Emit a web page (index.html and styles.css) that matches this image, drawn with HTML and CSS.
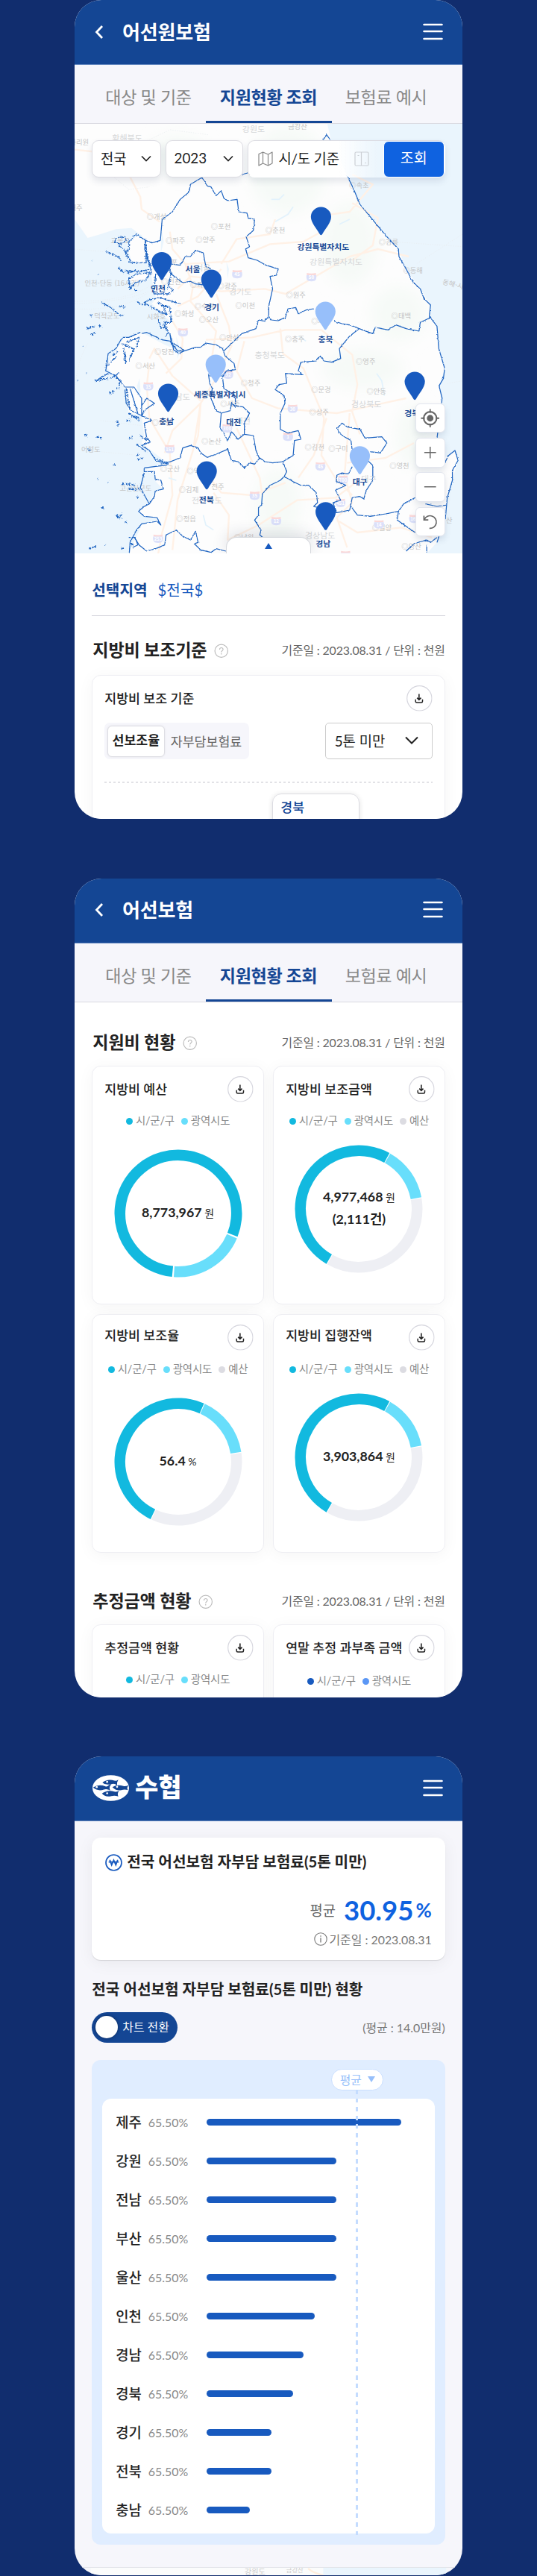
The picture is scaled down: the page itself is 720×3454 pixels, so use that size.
FILE: index.html
```html
<!DOCTYPE html>
<html lang="ko">
<head>
<meta charset="utf-8">
<title>어선원보험</title>
<link rel="stylesheet" href="styles.css">
</head>
<body>
<svg class="defs" width="0" height="0">
  <defs>
    <symbol id="back" viewBox="0 0 12 20"><path d="M10 2 2.500 10 10 18" fill="none" stroke="#fff" stroke-width="2.800"/></symbol>
    <symbol id="menu" viewBox="0 0 27 24"><path d="M1.500 2h24M1.500 11h24M1.500 21h24" stroke="#fff" stroke-width="2.600" stroke-linecap="round"/></symbol>
    <symbol id="chev" viewBox="0 0 14 9"><path d="m1 1.500 6 6 6-6" fill="none" stroke="#222" stroke-width="1.700"/></symbol>
    <symbol id="help" viewBox="0 0 20 20"><circle cx="10" cy="10" r="8.900" fill="none" stroke="#bbb" stroke-width="1.200"/><path d="M7.600 8.100c0-3.300 5-3.100 4.800-.2-.1 1.800-2.400 1.800-2.400 3.800M10 13v1.800" fill="none" stroke="#bbb" stroke-width="1.200"/></symbol>
    <symbol id="down" viewBox="0 0 35 35"><circle cx="17.500" cy="17.500" r="16.800" fill="#fff" stroke="#d6d6de" stroke-width="1.200"/><path d="M17 11.500v8M14.300 16.800l2.700 2.700 2.700-2.700" fill="none" stroke="#222" stroke-width="1.600"/><path d="M12.300 18.800v2.700q0 1.800 1.800 1.800h5.800q1.800 0 1.800-1.800v-2.700" fill="none" stroke="#222" stroke-width="1.500"/></symbol>
    <symbol id="pin" viewBox="0 0 27 39" overflow="visible"><path d="M13.500 38.500c-1 0-1.700-1-2.300-2.200C8.300 30.500 0 21.500 0 13.400a13.500 13.500 0 0 1 27 0c0 8.100-8.300 17.100-11.200 22.900-.6 1.200-1.300 2.200-2.300 2.200z"/></symbol>
    <symbol id="shield" viewBox="0 0 40 36"><path d="M3 3q17 4 34 0v8H3z" fill="#fbd9d9"/><path d="M2 11h36q3 17-6 22-12 4-24 0-9-5-6-22z" fill="#dbe0fa"/></symbol>
    <filter id="rough" x="-5%" y="-5%" width="110%" height="110%"><feTurbulence type="fractalNoise" baseFrequency=".09" numOctaves="3" seed="4"/><feDisplacementMap in="SourceGraphic" scale="7" xChannelSelector="R" yChannelSelector="G"/></filter>
    <filter id="ragged" x="-5%" y="-5%" width="110%" height="110%"><feTurbulence type="fractalNoise" baseFrequency=".16" numOctaves="3" seed="8"/><feDisplacementMap in="SourceGraphic" scale="14" xChannelSelector="R" yChannelSelector="G"/></filter>
    <filter id="haze"><feGaussianBlur stdDeviation="30"/></filter>
  </defs>
</svg>

<main class="board">

<section class="phone">
  <header class="bar"><svg class="ico-back"><use href="#back"/></svg><h1>어선원보험</h1><svg class="ico-menu"><use href="#menu"/></svg></header>
  <nav class="tabs"><a>대상 및 기준</a><a class="on">지원현황 조회</a><a>보험료 예시</a></nav>

  <div class="map">
    <svg class="map-art" viewBox="29 496 1510 1728" preserveAspectRatio="none">
      <rect x="29" y="496" width="1510" height="1728" fill="#fdfdfd"/>
      <g fill="#f6faf7" filter="url(#haze)">
        <ellipse cx="860" cy="680" rx="150" ry="180"/><ellipse cx="1100" cy="980" rx="110" ry="170"/><ellipse cx="1290" cy="1260" rx="110" ry="110"/><ellipse cx="1150" cy="1480" rx="160" ry="80"/><ellipse cx="820" cy="2030" rx="90" ry="150"/><ellipse cx="1350" cy="1750" rx="70" ry="130"/><ellipse cx="430" cy="620" rx="120" ry="80"/>
      </g>
      <g fill="#eaf5fd">
        <path d="M1013 496 1028 565 1090 705 1112 750 1140 820 1180 870 1240 945 1290 1000 1320 1080 1375 1160 1415 1225 1410 1260 1440 1310 1447 1400 1470 1480 1450 1550 1458 1620 1440 1760 1470 1840 1510 1810 1522 1850 1490 1960 1470 2070 1440 2180 1400 2224H1539V496z"/>
        <path d="M29 880 80 955 130 940 190 920 250 915 290 945 305 965 320 1060 330 1120 345 1200 330 1220 380 1270 400 1290 370 1310 400 1340 420 1380 440 1410 380 1385 290 1335 220 1360 150 1470 190 1520 225 1560 240 1660 290 1670 300 1750 290 1780 390 1860 300 1890 320 1900 285 1960 320 2025 280 2050 300 2075 360 2085 290 2110 240 2224H29z"/>
        <path d="m310 1900 30 0 5 35 28 30-30 8-25 50-30-60z"/>
        <path d="M272 1550l10-30 4 55-8 15zM425 1350l16 60-12 30zM368 920l8 50-12 50zM620 1050l10 30-5 40z"/>
      </g>
      <path d="M245 970 272 945 303 966 308 1055 252 1055 240 1010zM240 1120 285 1098 318 1095 300 1125 262 1140z" fill="#fdfdfd"/>
      <g fill="none" stroke="#fff1e6" stroke-width="7" stroke-linejoin="round">
        <path d="M29 600l90 10M240 700l45 90 5 50 70 50M400 930l10 70 50 60 30 90-10 60 100 120-20 130M410 1290l40 70-5 80-60 60M460 1060l170-10 160-70 130-10 70-40M490 1150l110 20 170-10 80 20 250-150 110-30 120 30M960 870l140-20 90-110-80-40M1110 815l100 60-20 110-80 60M600 1060l60-100 130-20 20-60M580 1180l50 130 10 80-60 130-60 100-10 130-20 60M540 1365l180-10 130-30 140 0 120 100 20 120-20 110 30 90M690 1370l-30 120 60 110 100 40 230 20 270-60M830 1320l10 100 80 60 80 200-10 150 60 100 60 60M320 1440l20-40 70 110 110 100M320 1460l-10 90 10 130 80 140 10 170-40 150-20 110M520 1620l-110 110-30 90M520 1620l-30 190-60 200-20 200M660 1720l90 200 10 70 M540 1900l60 80 120 10 130-50M570 1980l60 90-5 100 120-60 150-100 150-10 90-70M1090 1860l150-20 110-60M1100 1660l-20 250 30 110-60 60 40 120M1010 1680l-50 150-60 90M1050 2090l80 50 170-20 120 40M600 1080l-90 110-80 40M430 1160l50-50 90 10"/>
      </g>
      <g fill="none" stroke="#e8ebee" stroke-width="2" stroke-dasharray="4 5"><path d="M29 1000l110 10 50-40 60 10M29 1210q200 0 290-60M29 1220q200-10 290-50M1539 940l-180 120M1260 970l279 20M29 1240q180 10 280-60M80 1380q-70 120-40 330M130 1690l160 20M1480 1540l59-10M80 1810l200 20M200 620l200-100 150 20M170 700l70 60 80-10"/></g>
      <g fill="none" stroke="#e2f2fc" stroke-width="5"><path d="M795 800l30 0 20-20M810 890l50-30 20-30M1205 1500l20 30 10 60M900 1350l30 20M530 2070l10 40 30 20M1100 880l-40 20M395 1920l30 10"/></g>

      <g class="faint">
        <text x="682" y="528" class="area">강원도</text><text x="860" y="517">금강산</text><text x="175" y="565" class="area">황해북도</text><text x="10" y="580">사리원</text><text x="10" y="844">해주</text>
        <text x="310" y="880">◎개성</text><text x="560" y="918">◎포천</text><text x="772" y="935">◎춘천</text><text x="383" y="977">◎파주</text><text x="500" y="974">◎양주</text><text x="1098" y="755">◎속초</text><text x="1213" y="982">◎강릉</text><text x="1308" y="1096">◎동해</text><text x="380" y="1062">김포</text><text x="366" y="1141">◎인천</text><text x="478" y="1153">◎과천</text><text x="585" y="1160">◎광주</text><text x="852" y="1195">◎원주</text><text x="655" y="1236">◎이천</text><text x="496" y="1241">◎수원</text><text x="418" y="1270">◎화성</text><text x="513" y="1295">◎오산</text><text x="592" y="1366">◎안성</text><text x="848" y="1373">◎충주</text><text x="1262" y="1278">◎태백</text><text x="950" y="1300">◎제천</text><text x="1124" y="1463">◎영주</text><text x="340" y="1424">◎당진</text><text x="266" y="1479">◎서산</text><text x="676" y="1550">◎청주</text><text x="950" y="1577">◎문경</text><text x="1166" y="1582">◎안동</text><text x="942" y="1666">◎상주</text><text x="596" y="1633">◎세종</text><text x="330" y="1708">◎보령</text><text x="523" y="1783">◎논산</text><text x="925" y="1806">◎김천</text><text x="1017" y="1813">◎구미</text><text x="1255" y="1883">◎영천</text><text x="362" y="1893">◎군산</text><text x="466" y="1903">◎익산</text><text x="435" y="1977">◎김제</text><text x="562" y="1966">전주</text><text x="425" y="2095">◎정읍</text><text x="650" y="2170">◎남원</text><text x="1187" y="2130">◎밀양</text><text x="1302" y="2206">◎양산</text><text x="1475" y="2100">산</text><text x="55" y="1815">어청도</text><text x="205" y="1972">고군산군도</text><text x="68" y="1146">인천-단동 (16시간)</text><text x="105" y="1278">덕적군도</text><text x="310" y="1283">시화호</text><text x="1460" y="1140" transform="rotate(15 1460 1140)">동해-사카</text><text x="170" y="975">교동도</text>
        <g class="area"><text x="944" y="1064">강원특별자치도</text><text x="630" y="1182">경기도</text><text x="730" y="1438">충청북도</text><text x="420" y="1606">남도</text><text x="1106" y="1635">경상북도</text><text x="485" y="2024">전라북도</text><text x="926" y="2165">경상남도</text><text x="500" y="1086">서울</text><text x="655" y="1702">대전</text><text x="1145" y="1937">대구</text></g>
      </g>
      <g class="road">
        <use href="#shield" x="641" y="1080" width="42" height="40"/><text x="662" y="1109">45</text>
        <use href="#shield" x="930" y="1092" width="42" height="40"/><text x="951" y="1121">50</text>
        <use href="#shield" x="430" y="1314" width="42" height="40"/><text x="451" y="1343">40</text>
        <use href="#shield" x="295" y="1531" width="42" height="40"/><text x="316" y="1560">15</text>
        <use href="#shield" x="606" y="1484" width="42" height="40"/><text x="627" y="1513">32</text>
        <use href="#shield" x="857" y="1621" width="42" height="40"/><text x="878" y="1650">30</text>
        <use href="#shield" x="602" y="1700" width="42" height="40"/><text x="623" y="1729">300</text>
        <use href="#shield" x="839" y="1734" width="42" height="40"/><text x="860" y="1763">1</text>
        <use href="#shield" x="378" y="1783" width="42" height="40"/><text x="399" y="1812">151</text>
        <use href="#shield" x="965" y="1853" width="42" height="40"/><text x="986" y="1882">45</text>
        <use href="#shield" x="1053" y="1906" width="42" height="40"/><text x="1074" y="1935">700</text>
        <use href="#shield" x="709" y="1971" width="42" height="40"/><text x="730" y="2000">35</text>
        <use href="#shield" x="1043" y="2000" width="42" height="40"/><text x="1064" y="2029">451</text>
        <use href="#shield" x="793" y="2073" width="42" height="40"/><text x="814" y="2102">12</text>
        <use href="#shield" x="1193" y="2086" width="42" height="40"/><text x="1214" y="2115">14</text>
        <use href="#shield" x="1330" y="2064" width="42" height="40"/><text x="1347" y="2093">16</text>
        <use href="#shield" x="333" y="2144" width="42" height="40"/><text x="354" y="2173">253</text>
        <use href="#shield" x="1063" y="2210" width="42" height="40"/>
      </g>

      <g class="border" filter="url(#rough)">
        <path d="M997 560 1010 540 1028 565M1090 705 1112 750 1140 820 1180 870 1240 945 1290 1000 1292 1030 1320 1080 1345 1130 1375 1160 1390 1200 1415 1225 1410 1270 1440 1310 1447 1400 1470 1480 1465 1520 1448 1550 1460 1600 1456 1640 1440 1760M1470 1860 1485 1830 1510 1810 1522 1850 1500 1890 1500 1930 1480 2000 1473 2080 1440 2180"/>
        <path d="M363 965 370 880 410 850 440 800 475 770 480 740 525 712 545 745 560 750 580 785 600 765 610 795 625 805 662 800 668 850 700 855 705 875 730 880 725 925 697 950 710 990 695 1000 705 1035 740 1045 775 1065 822 1080 815 1105 790 1110 800 1160 785 1230 785 1270 770 1290 745 1285 735 1320 680 1340 640 1380 610 1410M680 700 703 694"/>
        <path d="M305 965 330 975 363 965M305 965 302 1000 320 1060 330 1100M405 1060 440 1065 460 1030 480 1030 500 1005 530 1015 540 1070 560 1080M385 1060 405 1100 430 1120 450 1135 480 1130 500 1140 540 1145"/>
        <path d="M785 1270 795 1285 820 1288 850 1275 860 1240 890 1235 900 1260 930 1245 960 1240M1040 1290 1070 1300 1100 1305 1150 1325 1190 1340 1200 1315 1250 1325 1280 1305 1320 1320 1370 1330 1375 1295 1415 1275"/>
        <path d="M1135 1322 1100 1350 1060 1400 1065 1440 1030 1455 1000 1450 985 1430 970 1450 910 1455 900 1490 915 1505 850 1500 855 1540 825 1545 810 1565 845 1590 848 1620 830 1660 830 1725 860 1740 900 1730 910 1765 885 1770 880 1830 840 1855 855 1895 845 1915"/>
        <path d="M455 1410 500 1395 520 1395 540 1378 580 1385 605 1400 615 1430 650 1460 655 1485 620 1490 605 1515 610 1560 640 1580 655 1600 655 1630 685 1635 710 1660 690 1700 690 1745 725 1750 735 1810 750 1845"/>
        <path d="M550 1500 555 1540 565 1560 560 1600 580 1650 600 1660 635 1650 640 1620 655 1635M600 1660 595 1720 610 1740 625 1770 640 1735 650 1745 665 1765 690 1745M550 1510H610"/>
        <path d="M390 1860 440 1840 450 1800 480 1790 510 1800 520 1820 545 1838 580 1825 625 1805 640 1850 665 1855 690 1880 710 1860 730 1865 750 1840 770 1855 800 1860 840 1855"/>
        <path d="M845 1915 830 1930 790 1950 760 1985 757 2030 745 2040 745 2070 730 2090 755 2130 750 2150 762 2160M262 2160 280 2190 310 2215 345 2205 380 2190 385 2150 425 2130 450 2155 480 2170 500 2135 510 2180 495 2185 520 2210 560 2220 580 2205 618 2215"/>
        <path d="M845 1915 880 1935 910 1950 940 1950 970 1980 975 2020 960 2035 1000 2045 1050 2060 1100 2050 1110 2000 1140 1995 1155 2005 1165 1970 1190 1930 1190 1870 1170 1850"/>
        <path d="M1180 1815 1220 1820 1245 1780 1225 1755 1160 1760 1140 1725 1090 1715 1070 1700 1052 1720 1060 1740 1080 1755 1105 1770 1110 1810M1110 1875 1095 1905 1070 1900 1050 1910 1048 1935 1085 1950 1045 1970 1065 2010 1035 2020 1050 2060"/>
        <path d="M1105 2035 1130 2070 1180 2075 1240 2065 1290 2055 1310 2025 1355 2000M1290 2055 1285 2090 1320 2115 1355 2140M1395 2025 1440 2035 1475 2030M1320 2215 1350 2185 1400 2170 1415 2180 1440 2160M1400 2220V2190"/>
        <path d="M290 1340 310 1335 370 1365 400 1370 430 1410 455 1410 435 1420 415 1405 400 1340 405 1375 440 1395 455 1410M285 1335 240 1355 215 1355 190 1400 160 1420 155 1460 150 1490 190 1510 205 1530 225 1555 260 1555 290 1600 290 1670 250 1650 230 1620 225 1565M245 1560 275 1660M290 1630 310 1600 340 1620 305 1645 290 1670 330 1690 300 1700 310 1760 325 1775 290 1790 320 1810 345 1850 395 1865M300 1880 390 1868M300 1882V1895L340 1895 343 1925 365 1930 375 1965 343 1973 340 1995 320 2025 285 1960 300 1900M320 2025 300 2035 278 2055 300 2075 350 2080 365 2110 350 2095 290 2105 270 2130 245 2180 242 2222M240 2160l25 0 10 30-20 10"/>
      </g>
      <g class="border coast" filter="url(#ragged)">
        <path d="M190 955l35-5 5 15-20 15-25-5zM240 970l30-30 35 25 3 90-60 0-20-45 15-10zM200 985l20 15 15 30M150 1010l50 20 10 15M305 970l8 70 15 30M225 1085l55 5 40-8M240 1120l30-20 55-5-20 30-40 10-20 25zM262 1160l10 10M345 1100l-8 80 60 0 15-15-20-20M395 1060l10 40-15 60M320 1205l40-10 80 25M330 1200l-30 15 30 20 60 30-20-40 30 10-50-20M370 1225l30 10 5 60-25 0 10 25-25-5-10-30M270 1210l15 10 20 5M135 1215l35 20 40 35 10-5M375 1300l20 35-10 15M230 1375l50-20-10 40M210 1380l50 20-20 50M220 1400l10 60-10-20M150 1475l40-40M160 1500l-50 30 50-10M190 1515l20 15-10 20M200 1500l-30 20M230 1560l15 90M240 1660l40 30M285 1750l25 20M270 1785l40 30M365 1865l25-10M345 1845l50 15"/>
        <path class="isles" d="M75 1320l35-10M95 1345l15-10M125 1305l8 10M90 1265l10 5M205 1230l20 3M70 1745l10 8M115 1755l20 5M195 1690l5 20M230 1690l15 0M240 1760l15-3M82 1808l12 2M180 1868l10 2M270 1828l10 0M215 1942l50 8M240 1965l45 2M135 2038l10 8M195 2080l20-15M190 2070l20 15M85 2205l30-10M272 1995l8 6M100 1045l1 1M120 1101l1 1M180 1425l20-15M190 1560l15 0M165 1580l20-8M250 1670l35 10M65 1390l1 1M75 1499l1 1M40 1530l1 1M225 2100l8-3M150 2188l1 1M210 2205l8-1M250 2185l8 8M275 1845l20-3M120 1921l1 1M160 1936l1 1M200 1075l20 20M235 1095l30-8"/>
      </g>

      <g class="pins">
        <use href="#pin" x="949" y="830" width="79" height="116"/><use href="#pin" x="329" y="1011" width="79" height="116"/><use href="#pin" x="522" y="1082" width="79" height="116"/>
        <use href="#pin" x="354" y="1541" width="79" height="116"/><use href="#pin" x="504" y="1853" width="79" height="116"/><use href="#pin" x="1314" y="1493" width="79" height="116"/><use href="#pin" x="967" y="2017" width="79" height="116"/>
        <g class="pale"><use href="#pin" x="966" y="1211" width="79" height="116"/><use href="#pin" x="539" y="1424" width="79" height="116"/><use href="#pin" x="1100" y="1792" width="79" height="116"/></g>
      </g>
      <g class="names">
        <text x="997" y="1002">강원특별자치도</text><text x="489" y="1093">서울</text><text x="354" y="1172">인천</text><text x="563" y="1246">경기</text><text x="1006" y="1376">충북</text><text x="594" y="1596">세종특별자치시</text><text x="387" y="1704">충남</text><text x="648" y="1707">대전</text><text x="542" y="2021">전북</text><text x="1342" y="1671">경북</text><text x="1140" y="1948">대구</text><text x="997" y="2196">경남</text>
      </g>
    </svg>

    <div class="filters">
      <div class="pick pick-a"><span>전국</span><svg class="chev"><use href="#chev"/></svg></div>
      <div class="pick pick-b"><span>2023</span><svg class="chev"><use href="#chev"/></svg></div>
      <div class="pick-c">
        <svg class="ico-map" viewBox="0 0 20 20"><path d="M1 3.500 6.500 1v15L1 19zM6.500 1l7 3v15l-7-3M13.500 4 19 1v15l-5.500 3" fill="none" stroke="#888" stroke-width="1.200" stroke-linejoin="round"/></svg>
        <span>시/도 기준</span>
        <svg class="ico-split" viewBox="0 0 20 20"><rect x="1" y="1" width="18" height="18" rx="1.500" fill="none" stroke="#ccd0d5" stroke-width="1.200"/><path d="M9.500 1v18M4.500 5.500h2M14 15.500h2" stroke="#ccd0d5" stroke-width="1.200"/></svg>
        <button>조회</button>
      </div>
    </div>

    <div class="controls">
      <i><svg viewBox="0 0 26 26"><circle cx="13" cy="13" r="8.800" fill="none" stroke="#666" stroke-width="2.200"/><circle cx="13" cy="13" r="4.500" fill="#666"/><path d="M13 .5v5M13 20.500v5M.5 13h5M20.500 13h5" stroke="#666" stroke-width="1.800"/></svg></i>
      <i><svg viewBox="0 0 26 26"><path d="M13 5v16M5 13h16" stroke="#666" stroke-width="1.500"/></svg></i>
      <i><svg viewBox="0 0 26 26"><path d="M5 13h16" stroke="#666" stroke-width="1.500"/></svg></i>
      <i><svg viewBox="0 0 26 26"><path d="M4.500 4.500v5.800h6M5 9.800A8.600 8.600 0 1 1 12 21.800" fill="none" stroke="#666" stroke-width="1.700"/></svg></i>
    </div>
    <div class="handle"><svg viewBox="0 0 10 8"><path d="M5 0l5 8H0z" fill="#185abf"/></svg></div>
  </div>

  <div class="sheet">
    <div class="region"><b>선택지역</b><span>$전국$</span></div>
    <div class="title title-first"><h2>지방비 보조기준</h2><svg class="help"><use href="#help"/></svg><small>기준일 : 2023.08.31 / 단위 : 천원</small></div>
    <div class="card wide">
      <div class="card-head"><h3>지방비 보조 기준</h3><svg class="down"><use href="#down"/></svg></div>
      <div class="row"><div class="seg"><b>선보조율</b><span>자부담보험료</span></div><div class="select"><span>5톤 미만</span><svg class="chev2" viewBox="0 0 18 11"><path d="m1 1.500 8 8 8-8" fill="none" stroke="#222" stroke-width="2"/></svg></div></div>
      <div class="dots"></div>
      <div class="tip">경북</div>
    </div>
  </div>
</section>

<section class="phone">
  <header class="bar"><svg class="ico-back"><use href="#back"/></svg><h1>어선보험</h1><svg class="ico-menu"><use href="#menu"/></svg></header>
  <nav class="tabs"><a>대상 및 기준</a><a class="on">지원현황 조회</a><a>보험료 예시</a></nav>
  <div class="status">
    <div class="title"><h2>지원비 현황</h2><svg class="help"><use href="#help"/></svg><small>기준일 : 2023.08.31 / 단위 : 천원</small></div>
    <div class="grid">
      <article class="card">
        <div class="card-head"><h3>지방비 예산</h3><svg class="down"><use href="#down"/></svg></div>
        <p class="legend"><span class="c1">시/군/구</span><span class="c2">광역시도</span></p>
        <div class="donut low">
          <svg viewBox="0 0 172 172"><circle class="k1" cx="86" cy="86" r="78.200" pathLength="360" stroke-dasharray="286 74" transform="rotate(95.600 86 86)"/><circle class="k2" cx="86" cy="86" r="78.200" pathLength="360" stroke-dasharray="71 289" transform="rotate(23 86 86)"/></svg>
          <p><b>8,773,967</b> 원</p>
        </div>
      </article>
      <article class="card">
        <div class="card-head"><h3>지방비 보조금액</h3><svg class="down"><use href="#down"/></svg></div>
        <p class="legend"><span class="c1">시/군/구</span><span class="c2">광역시도</span><span class="c3">예산</span></p>
        <div class="donut">
          <svg viewBox="0 0 172 172"><circle class="k1" cx="86" cy="86" r="78.200" pathLength="360" stroke-dasharray="178.300 181.700" transform="rotate(120.500 86 86)"/><circle class="k2" cx="86" cy="86" r="78.200" pathLength="360" stroke-dasharray="49.800 310.200" transform="rotate(-60.400 86 86)"/><circle class="k3" cx="86" cy="86" r="78.200" pathLength="360" stroke-dasharray="129.500 230.500" transform="rotate(-9.800 86 86)"/></svg>
          <p><b>4,977,468</b> 원<br><b>(2,111건)</b></p>
        </div>
      </article>
      <article class="card second">
        <div class="card-head"><h3>지방비 보조율</h3><svg class="down"><use href="#down"/></svg></div>
        <p class="legend"><span class="c1">시/군/구</span><span class="c2">광역시도</span><span class="c3">예산</span></p>
        <div class="donut low">
          <svg viewBox="0 0 172 172"><circle class="k1" cx="86" cy="86" r="78.200" pathLength="360" stroke-dasharray="178 182" transform="rotate(115.800 86 86)"/><circle class="k2" cx="86" cy="86" r="78.200" pathLength="360" stroke-dasharray="56.400 303.600" transform="rotate(-65.400 86 86)"/><circle class="k3" cx="86" cy="86" r="78.200" pathLength="360" stroke-dasharray="123 237" transform="rotate(-8 86 86)"/></svg>
          <p><b>56.4</b> %</p>
        </div>
      </article>
      <article class="card second">
        <div class="card-head"><h3>지방비 집행잔액</h3><svg class="down"><use href="#down"/></svg></div>
        <p class="legend"><span class="c1">시/군/구</span><span class="c2">광역시도</span><span class="c3">예산</span></p>
        <div class="donut">
          <svg viewBox="0 0 172 172"><circle class="k1" cx="86" cy="86" r="78.200" pathLength="360" stroke-dasharray="178.300 181.700" transform="rotate(120.500 86 86)"/><circle class="k2" cx="86" cy="86" r="78.200" pathLength="360" stroke-dasharray="49.800 310.200" transform="rotate(-60.400 86 86)"/><circle class="k3" cx="86" cy="86" r="78.200" pathLength="360" stroke-dasharray="129.500 230.500" transform="rotate(-9.800 86 86)"/></svg>
          <p><b>3,903,864</b> 원</p>
        </div>
      </article>
    </div>
    <div class="title title-next"><h2>추정금액 현황</h2><svg class="help"><use href="#help"/></svg><small>기준일 : 2023.08.31 / 단위 : 천원</small></div>
    <div class="grid">
      <article class="card"><div class="card-head"><h3>추정금액 현황</h3><svg class="down"><use href="#down"/></svg></div><p class="legend"><span class="c1">시/군/구</span><span class="c2">광역시도</span></p></article>
      <article class="card"><div class="card-head"><h3>연말 추정 과부족 금액</h3><svg class="down"><use href="#down"/></svg></div><p class="legend nudge"><span class="c4">시/군/구</span><span class="c5">광역시도</span></p></article>
    </div>
  </div>
</section>

<section class="phone gray">
  <header class="bar">
    <svg class="logo" viewBox="0 0 147 104">
      <ellipse cx="73.500" cy="52" rx="73.500" ry="52" fill="#fff"/>
      <g fill="#144694"><path d="M2 50Q24 34 52 45 58 49 66 40 70 36 76 36 64 50 72 62 58 54 46 58 22 66 2 50z"/><path d="M40 30Q60 14 88 22 96 24 104 18 97 28 99 42 90 32 76 36 52 42 40 30z"/><path d="M80 48Q100 36 124 44 134 46 146 40 136 50 142 60 130 56 116 60 94 64 80 48z"/><path d="M38 74Q60 58 88 66 98 70 108 62 98 74 104 86 90 80 76 84 52 90 38 74z"/></g>
      <g fill="#fff"><circle cx="17" cy="48" r="4"/><circle cx="59" cy="27" r="4"/><circle cx="99" cy="47" r="4"/><circle cx="59" cy="73" r="4"/></g>
    </svg>
    <strong class="brand">수협</strong><svg class="ico-menu"><use href="#menu"/></svg>
  </header>
  <div class="premium">
    <div class="summary">
      <h3><svg viewBox="0 0 23 23"><circle cx="11.500" cy="11.500" r="10.500" fill="none" stroke="#185abf" stroke-width="1.700"/><path d="m6.200 7.800 2.500 6.800 2.800-6.400 2.800 6.400 2.500-6.800M4.700 10.700h13.600" fill="none" stroke="#185abf" stroke-width="1.700"/></svg>전국 어선보험 자부담 보험료(5톤 미만)</h3>
      <p class="avg"><span>평균</span><b>30.95</b><em>%</em></p>
      <p class="date"><svg viewBox="0 0 18 18"><circle cx="9" cy="9" r="8.200" fill="none" stroke="#777" stroke-width="1.100"/><path d="M9 7.300v6.200M9 4.300v1.500" stroke="#777" stroke-width="1.300"/></svg>기준일 : 2023.08.31</p>
    </div>
    <h3 class="chart-title">전국 어선보험 자부담 보험료(5톤 미만) 현황</h3>
    <div class="tools"><div class="toggle"><i></i>차트 전환</div><small>(평균 : 14.0만원)</small></div>
    <div class="chart">
      <div class="chart-pill">평균<svg viewBox="0 0 10 8"><path d="M0 0h10L5 8z" fill="#97bffa"/></svg></div>
      <div class="chart-body">
        <div class="item"><b>제주</b><span>65.50%</span><i style="width:260.500px"></i></div>
        <div class="item"><b>강원</b><span>65.50%</span><i style="width:173.500px"></i></div>
        <div class="item"><b>전남</b><span>65.50%</span><i style="width:173.500px"></i></div>
        <div class="item"><b>부산</b><span>65.50%</span><i style="width:173.500px"></i></div>
        <div class="item"><b>울산</b><span>65.50%</span><i style="width:173.500px"></i></div>
        <div class="item"><b>인천</b><span>65.50%</span><i style="width:144.700px"></i></div>
        <div class="item"><b>경남</b><span>65.50%</span><i style="width:130px"></i></div>
        <div class="item"><b>경북</b><span>65.50%</span><i style="width:116px"></i></div>
        <div class="item"><b>경기</b><span>65.50%</span><i style="width:87.200px"></i></div>
        <div class="item"><b>전북</b><span>65.50%</span><i style="width:87.200px"></i></div>
        <div class="item"><b>충남</b><span>65.50%</span><i style="width:58.200px"></i></div>
      </div>
      <div class="mean"></div>
    </div>
  </div>
  <svg class="peek" viewBox="0 0 520 12"><path d="M0 0h520v12H0z" fill="#fbfcfc"/><path d="M340 0h180v12H340z" fill="#eaf5fd"/><path d="M318 1q6 6 22 10" fill="none" stroke="#ffeedd" stroke-width="2.500"/><text x="225" y="10" font-size="11">강원도</text><text x="286" y="7" font-size="9">금강산</text></svg>
</section>

</main>
</body>
</html>
```

FILE: styles.css
```css
* { box-sizing: border-box; }
body, h1, h2, h3, p { margin: 0; }
body { background: #112d6e; color: #222; font-family: Lato, "Noto Sans CJK KR", sans-serif; -webkit-font-smoothing: antialiased; }
svg { display: block; flex: none; }
.defs { position: absolute; }
.board { display: flex; flex-direction: column; align-items: center; gap: 79.7px; height: 3454px; overflow: hidden; }
.phone { width: 520px; height: 1098px; flex: none; border-radius: 36px; overflow: hidden; background: #fff; white-space: nowrap; }
.phone.gray { background: #f6f6fb; display: flex; flex-direction: column; }

.bar { height: 87px; flex: none; background: #144694; color: #fff; display: flex; align-items: center; padding: 0 26px 1px 27px; border-bottom: 1px solid #5f84bd; }
.bar h1 { font-size: 26px; line-height: 38px; font-weight: 700; margin-left: 25px; letter-spacing: -.2px; }
.ico-back { width: 12px; height: 20px; }
.ico-menu { width: 27px; height: 24px; margin-left: auto; }

.tabs { height: 79px; background: #f6f6fb; display: flex; padding-left: 22.5px; border-bottom: 1px solid #d9d9e0; }
.tabs a { width: 153px; text-align: center; padding-top: 26px; font-size: 23.1px; line-height: 34px; letter-spacing: -.4px; color: #888; height: 78px; }
.tabs a.on { width: 169px; color: #144694; font-weight: 700; border-bottom: 3px solid #144694; }
.tabs a:last-child { width: 146px; }

.map { position: relative; height: 576px; border-bottom: 1px solid #d5d8dd; }
.map-art { position: absolute; width: 520px; height: 576px; }
.map-art text { font-family: "Noto Sans CJK KR", sans-serif; }
.faint { fill: #c4c4c4; font-size: 27px; }
.faint .area { fill: #d4d6d8; font-size: 32px; }
.road text { font-size: 18px; font-weight: 700; fill: #fff; text-anchor: middle; }
.border { fill: none; stroke: #2166c2; stroke-width: 3.6; stroke-linejoin: round; }
.coast { stroke-width: 3.8; }
.isles { stroke-width: 7; stroke-dasharray: 8 4; }
.pins { fill: #185abf; }
.pins .pale { fill: #97bffa; }
.names { fill: #1a4a96; font-size: 31.5px; font-weight: 700; text-anchor: middle; }

.filters { position: relative; display: flex; gap: 6px; padding: 22px 23px 0; font-size: 18.8px; }
.pick, .pick-c { height: 50px; border: 1.5px solid #dcdce2; border-radius: 9px; box-shadow: 0 5px 10px rgba(40, 60, 100, .12); display: flex; align-items: center; padding-bottom: 4px; background: #fff; }
.pick { justify-content: space-between; padding-left: 11px; padding-right: 12px; }
.pick-a { width: 92.500px; }
.pick-b { width: 104px; }
.chev { width: 14px; height: 9px; margin-top: 3px; }
.pick-c { flex: 1; padding: 0 0 0 13px; background: linear-gradient(90deg, #fff 45%, rgba(255, 255, 255, .1) 66%); border-color: #dcdce2 transparent transparent #dcdce2; }
.pick-c span { margin: -4px 20px 0 8px; letter-spacing: -.2px; }
.ico-map, .ico-split { width: 20px; height: 20px; }
.pick-c button { margin-left: auto; width: 82.500px; height: 49px; border: 1.5px solid #fff; border-radius: 7px; background: #0f62e0; color: #fff; font: 400 19.500px Lato, "Noto Sans CJK KR", sans-serif; padding: 0 0 5px; }
.controls { position: absolute; right: 23px; top: 374.500px; display: flex; flex-direction: column; gap: 6.700px; }
.controls i { width: 40px; height: 39.700px; border: 1px solid #e3e6ee; border-radius: 6px; background: #fff; box-shadow: 0 5px 9px rgba(40, 60, 100, .13); display: flex; align-items: center; justify-content: center; }
.controls svg { width: 25.500px; height: 25.500px; }
.handle { position: absolute; left: 203px; bottom: -1px; width: 114px; height: 22px; background: #fff; border: 1px solid #d5d8dd; border-bottom: 0; border-radius: 14px 14px 0 0; box-shadow: 0 -4px 20px rgba(40, 50, 80, .16); display: flex; justify-content: center; padding-top: 7px; clip-path: inset(-40px -40px 0); }
.handle svg { width: 10px; height: 8px; }

.sheet { padding: 0 23.300px; }
.region { display: flex; gap: 14px; height: 84px; padding-top: 34px; font-size: 20.200px; line-height: 30px; border-bottom: 1.500px solid #d6d6de; color: #185abf; }
.region b { color: #144694; }
.title { display: flex; align-items: center; height: 40px; padding-left: 1px; }
.title-first { margin: 26px 0 13px; }
.title h2 { font-size: 23.100px; line-height: 34px; font-weight: 700; margin-top: -2px; letter-spacing: -.15px; }
.help { width: 19.500px; height: 19.500px; margin: 2px 0 0 10px; }
.title small { margin: 0 0 0 auto; font-size: 15.900px; line-height: 24px; letter-spacing: -.15px; color: #666; }
.card { border: 1.500px solid #eeeef3; border-radius: 12px; background: #fff; box-shadow: 0 3px 22px rgba(0, 0, 0, .045); padding: 13px 13px 0 16px; height: 320px; }
.card-head { display: flex; align-items: center; justify-content: space-between; height: 35px; }
.card-head h3 { font-size: 17.300px; line-height: 26px; font-weight: 500; }
.second .card-head h3 { margin-top: -5px; }
.down { width: 34.700px; height: 34.700px; }
.wide { padding-right: 16px; }
.row { display: flex; justify-content: space-between; margin-top: 15px; }
.seg { width: 194px; height: 49px; border-radius: 7px; background: #f6f6fb; padding: 3.500px; font-size: 17.300px; display: flex; align-items: center; color: #666; }
.seg b { color: #222; background: #fff; border: 1px solid #dedee4; border-radius: 6px; height: 42px; width: 77px; line-height: 37px; text-align: center; box-shadow: 0 0 3px rgba(0, 0, 0, .08); }
.seg span { margin-left: 8px; }
.select { width: 144px; height: 49px; border: 1.500px solid #ccc; border-radius: 5px; display: flex; align-items: center; justify-content: space-between; padding: 0 18px 2px 12px; font-size: 18.800px; }
.chev2 { width: 18px; height: 11px; }
.dots { margin-top: 30px; height: 2px; background: repeating-linear-gradient(90deg, #e2e2e6 0 3px, transparent 3px 6px); }
.tip { margin: 14px 0 0 225px; width: 117px; height: 60px; border: 1px solid #dcdce2; border-radius: 12px; box-shadow: 0 1px 7px rgba(0, 0, 0, .12); padding: 5px 10px; font-size: 17.300px; line-height: 26px; font-weight: 500; color: #144694; }

.status { padding: 34px 23.300px 0; }
.status .title { margin-bottom: 11.600px; }
.status .title-next { margin-top: 45px; }
.grid { display: grid; grid-template-columns: 1fr 1fr; gap: 12.400px; }
.legend { display: flex; justify-content: center; gap: 9px; margin: 14px 0 1px -3px; height: 22px; font-size: 14.400px; line-height: 22px; letter-spacing: -.15px; color: #888; }
.nudge { margin-top: 16px; }
.legend span { display: flex; align-items: center; gap: 4px; }
.legend span::before { content: ""; width: 9px; height: 9px; border-radius: 50%; background: #12b9df; margin-top: 1px; }
.legend .c2::before { background: #68defb; }
.legend .c3::before { background: #dcdce2; }
.legend .c4::before { background: #185abf; }
.legend .c5::before { background: #5b97f5; }
.donut { position: relative; width: 172px; margin: 21px auto 0; left: -1.500px; display: grid; align-items: center; }
.donut.low { margin-top: 27px; }
.donut svg, .donut p { grid-area: 1 / 1; }
.donut svg { width: 172px; height: 172px; }
.donut circle { fill: none; stroke-width: 14.600; }
.k1 { stroke: #12b9df; }
.k2 { stroke: #68defb; }
.k3 { stroke: #eeeff4; }
.donut p { text-align: center; font-size: 14px; line-height: 29px; margin-top: -2px; }
.donut b { font-size: 17.8px; font-weight: 700; }

.logo { width: 49px; height: 35px; margin-left: -3.500px; }
.brand { font-size: 34px; line-height: 50px; font-weight: 900; margin: -4px 0 0 8.5px; }
.premium { padding: 22px 23.300px 0; height: 999.500px; flex: none; }
.summary { height: 164px; background: #fff; border-radius: 12px; box-shadow: 0 1px 1px rgba(0, 0, 0, .12), 0 4px 22px rgba(0, 0, 0, .06); padding: 17px 18px 0; }
.summary h3 { display: flex; align-items: center; gap: 6px; font-size: 20.200px; line-height: 30px; font-weight: 700; }
.summary h3 svg { width: 23px; height: 23px; margin-top: 3px; }
.avg { display: flex; justify-content: flex-end; align-items: baseline; margin-top: 26px; height: 48px; line-height: 48px; color: #0f62e0; }
.avg span { font-size: 18.800px; color: #666; margin-right: 11px; position: relative; top: -6px; }
.avg b { font-size: 36.5px; }
.avg em { font-style: normal; font-weight: 700; font-size: 26px; margin-left: 3px; position: relative; top: -4px; }
.date { display: flex; justify-content: flex-end; align-items: center; gap: 3px; height: 24px; margin-top: 3px; font-size: 15.900px; color: #777; }
.date svg { width: 18px; height: 18px; }
.chart-title { font-size: 20.200px; line-height: 30px; margin: 24px 0 16px; }
.tools { display: flex; justify-content: space-between; align-items: center; height: 41px; font-size: 15.900px; }
.tools small { font-size: 15.900px; color: #777; }
.toggle { width: 115px; height: 41px; border-radius: 21px; background: #144694; color: #fff; display: flex; align-items: center; gap: 6px; padding: 0 0 3px 5px; }
.toggle i { width: 30px; height: 30px; border-radius: 50%; background: #fff; box-shadow: 0 0 4px rgba(0, 0, 0, .4); margin-top: 2px; }
.chart { position: relative; margin-top: 22.500px; height: 650px; border-radius: 12px; background: #e0edff; padding: 12px 14px; }
.chart-pill { width: 70px; height: 29px; margin-left: 307px; border: 1.500px solid #c9dfff; border-radius: 15px; background: #fff; color: #97bffa; font-size: 15.900px; line-height: 23px; display: flex; align-items: center; justify-content: center; gap: 8px; }
.chart-pill svg { width: 10px; height: 8px; }
.chart-body { margin-top: 11.500px; height: 583px; border-radius: 12px; background: #fff; padding: 5.500px 0 0 18px; }
.item { height: 52px; display: flex; align-items: center; }
.item b { width: 43.500px; font-size: 18.800px; font-weight: 500; margin-top: -3px; }
.item span { width: 78.500px; font-size: 15.900px; color: #888; }
.item i { height: 9px; border-radius: 5px; background: #185abf; }
.mean { position: absolute; left: 353.800px; top: 40px; width: 2.600px; height: 603px; background: repeating-linear-gradient(#c4dcff 0 5.800px, transparent 5.800px 11.600px); }
.peek { width: 520px; height: 12px; border-top: 1px solid #e2e4e9; }
.peek text { font-family: "Noto Sans CJK KR", sans-serif; fill: #ccc; }
```
